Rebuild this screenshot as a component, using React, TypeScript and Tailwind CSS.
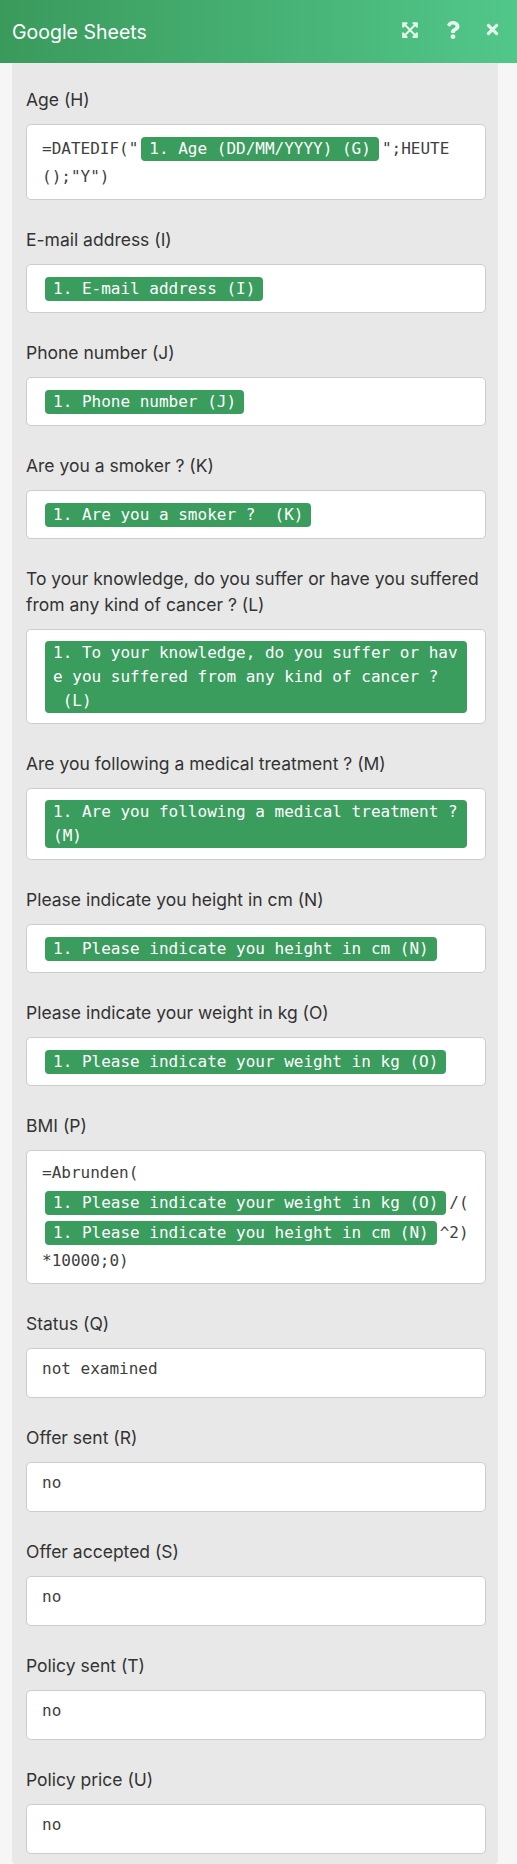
import React from "react";
import { FaExpandArrowsAlt, FaQuestion, FaTimes } from "react-icons/fa";

const Pill = ({ children }: { children: React.ReactNode }) => (
  <span className="mx-[3px] inline-block h-[24px] rounded-[4px] bg-[#3a9c5d] px-[8px] leading-[24px] text-white whitespace-pre">
    {children}
  </span>
);

const BlockPill = ({ text }: { text: string }) => (
  <div className="mx-[3px] rounded-[4px] bg-[#3a9c5d] px-[8px] leading-[24px] text-white whitespace-pre">
    {text}
  </div>
);

const boxBase =
  "rounded-[5px] border border-[#cdcdcd] bg-white px-[15px] font-['DejaVu_Sans_Mono',monospace] text-[16px] text-[#404040]";

const Field = ({ label, children }: { label: string; children: React.ReactNode }) => (
  <div className="flex flex-col">
    <div className="mb-[11px] text-[17.5px] leading-[26px] text-[#333333]">{label}</div>
    {children}
  </div>
);

const PillBox = ({ text }: { text: string }) => (
  <div className={`${boxBase} pt-[9px] pb-[8px]`}>
    <div className="flex h-[30px] items-center">
      <Pill>{text}</Pill>
    </div>
  </div>
);

const TextBox = ({ text }: { text: string }) => (
  <div className={`${boxBase} pt-[7px] pb-[15px]`}>
    <div className="h-[26px] leading-[26px] whitespace-pre">{text}</div>
  </div>
);

export default function App() {
  return (
    <div className="min-h-screen bg-[#f6f6f6] font-['Inter','Noto_Sans',sans-serif]">
      <div className="flex h-[63px] items-center bg-linear-to-r from-[#3a9a5c] to-[#52c78a] pl-[12px]">
        <div className="text-[19.5px] leading-[24px] text-white">Google Sheets</div>
        <div className="mb-[4px] ml-auto mr-[16px] flex items-center text-white/85">
          <FaExpandArrowsAlt size={18} />
          <FaQuestion size={18} className="ml-[25px]" />
          <FaTimes size={17} className="ml-[22px]" />
        </div>
      </div>

      <div className="ml-[12px] w-[486px] rounded-b-[4px] bg-[#e8e8e8] pt-[24px] pb-[10px] pl-[14px] pr-[12px]">
        <div className="flex flex-col gap-[27px]">
          <Field label="Age (H)">
            <div className={`${boxBase} pt-[9px] pb-[9px]`}>
              <div className="flex h-[30px] items-center whitespace-pre leading-[24px]">
                <span>=DATEDIF("</span>
                <Pill>1. Age (DD/MM/YYYY) (G)</Pill>
                <span>";HEUTE</span>
              </div>
              <div className="h-[26px] leading-[26px] whitespace-pre">();"Y")</div>
            </div>
          </Field>

          <Field label="E-mail address (I)">
            <PillBox text="1. E-mail address (I)" />
          </Field>

          <Field label="Phone number (J)">
            <PillBox text="1. Phone number (J)" />
          </Field>

          <Field label="Are you a smoker ? (K)">
            <PillBox text="1. Are you a smoker ?  (K)" />
          </Field>

          <Field label="To your knowledge, do you suffer or have you suffered from any kind of cancer ? (L)">
            <div className={`${boxBase} pt-[9px] pb-[8px]`}>
              <div className="py-[2px]">
                <BlockPill
                  text={
                    "1. To your knowledge, do you suffer or hav\ne you suffered from any kind of cancer ?\n (L)"
                  }
                />
              </div>
            </div>
          </Field>

          <Field label="Are you following a medical treatment ? (M)">
            <div className={`${boxBase} pt-[9px] pb-[9px]`}>
              <div className="py-[2px]">
                <BlockPill text={"1. Are you following a medical treatment ?\n(M)"} />
              </div>
            </div>
          </Field>

          <Field label="Please indicate you height in cm (N)">
            <PillBox text="1. Please indicate you height in cm (N)" />
          </Field>

          <Field label="Please indicate your weight in kg (O)">
            <PillBox text="1. Please indicate your weight in kg (O)" />
          </Field>

          <Field label="BMI (P)">
            <div className={`${boxBase} pt-[9px] pb-[9px]`}>
              <div className="h-[28px] leading-[26px] whitespace-pre">=Abrunden(</div>
              <div className="flex h-[30px] items-center whitespace-pre leading-[24px]">
                <Pill>1. Please indicate your weight in kg (O)</Pill>
                <span>/(</span>
              </div>
              <div className="flex h-[30px] items-center whitespace-pre leading-[24px]">
                <Pill>1. Please indicate you height in cm (N)</Pill>
                <span>^2)</span>
              </div>
              <div className="h-[26px] leading-[26px] whitespace-pre">*10000;0)</div>
            </div>
          </Field>

          <Field label="Status (Q)">
            <TextBox text="not examined" />
          </Field>

          <Field label="Offer sent (R)">
            <TextBox text="no" />
          </Field>

          <Field label="Offer accepted (S)">
            <TextBox text="no" />
          </Field>

          <Field label="Policy sent (T)">
            <TextBox text="no" />
          </Field>

          <Field label="Policy price (U)">
            <TextBox text="no" />
          </Field>
        </div>
      </div>
    </div>
  );
}
